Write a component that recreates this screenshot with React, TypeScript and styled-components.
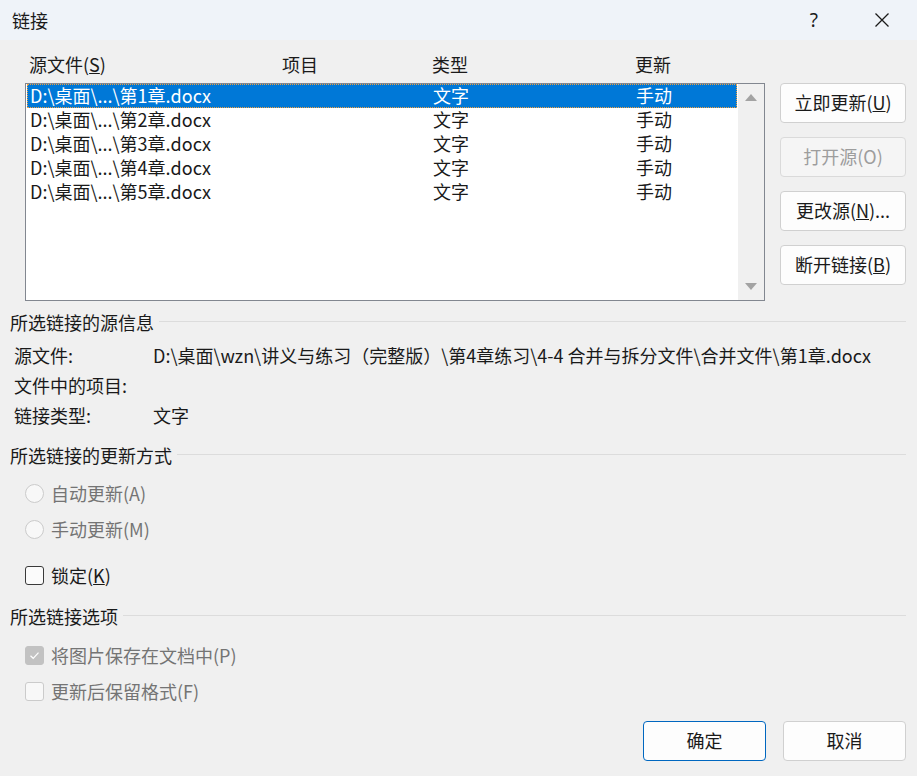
import { createGlobalStyle, styled } from "styled-components"

const GlobalStyle = createGlobalStyle`
  html, body {
    margin: 0;
    padding: 0;
    background: #f0f0f0;
  }
  body {
    font-family: "Noto Sans CJK SC", "Noto Sans", sans-serif;
    font-size: 18px;
    color: #1a1a1a;
  }
`

type LinkItem = { file: string; item: string; kind: string; update: string }

const links: LinkItem[] = [1, 2, 3, 4, 5].map((n) => ({
  file: `D:\\桌面\\...\\第${n}章.docx`,
  item: "",
  kind: "文字",
  update: "手动",
}))

const sourcePath = "D:\\桌面\\wzn\\讲义与练习（完整版）\\第4章练习\\4-4 合并与拆分文件\\合并文件\\第1章.docx"

const Key = ({ children }: { children: string }) => <u>{children}</u>

const App = () => {
  return (
    <Wrapper>
      <GlobalStyle />
      <TitleBar>
        <span>链接</span>
        <TitleTools>
          <HelpMark>?</HelpMark>
          <svg width="16" height="16" viewBox="0 0 16 16">
            <path d="M1.5 1.5 L14.5 14.5 M14.5 1.5 L1.5 14.5" stroke="#1a1a1a" strokeWidth="1.3" fill="none" />
          </svg>
        </TitleTools>
      </TitleBar>

      <Body>
        <TopArea>
          <div>
            <Columns className="head">
              <span>源文件(<Key>S</Key>)</span>
              <span>项目</span>
              <span>类型</span>
              <span>更新</span>
            </Columns>
            <ListBox>
              <Rows>
                {links.map((each, index) => (
                  <Row key={index} $selected={index === 0}>
                    <Columns>
                      <span>{each.file}</span>
                      <span>{each.item}</span>
                      <span>{each.kind}</span>
                      <span>{each.update}</span>
                    </Columns>
                  </Row>
                ))}
              </Rows>
              <ScrollTrack>
                <Arrow $down={false} />
                <Arrow $down />
              </ScrollTrack>
            </ListBox>
          </div>
          <SideButtons>
            <Button>立即更新(<Key>U</Key>)</Button>
            <Button disabled>打开源(O)</Button>
            <Button>更改源(<Key>N</Key>)...</Button>
            <Button>断开链接(<Key>B</Key>)</Button>
          </SideButtons>
        </TopArea>

        <GroupTitle $top={9}>所选链接的源信息</GroupTitle>
        <InfoList>
          <InfoRow>
            <span>源文件:</span>
            <span>{sourcePath}</span>
          </InfoRow>
          <InfoRow>
            <span>文件中的项目:</span>
            <span></span>
          </InfoRow>
          <InfoRow>
            <span>链接类型:</span>
            <span>文字</span>
          </InfoRow>
        </InfoList>

        <GroupTitle $top={13}>所选链接的更新方式</GroupTitle>
        <Options $top={8}>
          <Option $disabled>
            <Radio />
            <span>自动更新(A)</span>
          </Option>
          <Option $disabled>
            <Radio />
            <span>手动更新(M)</span>
          </Option>
          <Option className="lock">
            <CheckBox />
            <span>锁定(<Key>K</Key>)</span>
          </Option>
        </Options>

        <GroupTitle $top={11}>所选链接选项</GroupTitle>
        <Options $top={9}>
          <Option $disabled>
            <CheckBox $checked $disabled>
              <svg width="13" height="13" viewBox="0 0 13 13">
                <path d="M2.5 6.8 L5.2 9.3 L10.5 3.6" stroke="#fff" strokeWidth="1.2" fill="none" />
              </svg>
            </CheckBox>
            <span>将图片保存在文档中(P)</span>
          </Option>
          <Option $disabled>
            <CheckBox $disabled />
            <span>更新后保留格式(F)</span>
          </Option>
        </Options>

        <Footer>
          <Button className="primary">确定</Button>
          <Button>取消</Button>
        </Footer>
      </Body>
    </Wrapper>
  )
}

const Wrapper = styled.div`
  width: 917px;
  height: 776px;
  background: #f0f0f0;
  display: flex;
  flex-direction: column;
  overflow: hidden;
`

const TitleBar = styled.div`
  height: 40px;
  flex: none;
  background: #eff3f9;
  display: flex;
  align-items: center;
  justify-content: space-between;
  padding-left: 12px;
  line-height: 1;
`

const TitleTools = styled.div`
  display: flex;
  align-items: center;
  gap: 56px;
  padding-right: 27px;
`

const HelpMark = styled.span`
  font-family: "Noto Sans", sans-serif;
  font-size: 19px;
`

const Body = styled.div`
  padding: 0 11px 0 10px;
  display: flex;
  flex-direction: column;
`

const TopArea = styled.div`
  display: grid;
  grid-template-columns: 740px 126px;
  column-gap: 15px;
  padding-left: 15px;
  margin-top: 12px;
  align-items: end;
`

const Columns = styled.div`
  display: grid;
  grid-template-columns: 253px 150px 203px 1fr;
  height: 24px;
  align-items: center;
  line-height: 1;
  white-space: nowrap;

  &.head {
    padding-left: 4px;
    margin-bottom: 7px;
  }
`

const ListBox = styled.div`
  height: 218px;
  box-sizing: border-box;
  border: 1px solid #828790;
  background: #fff;
  display: flex;
`

const Rows = styled.div`
  flex: 1;
  padding: 0 1px;
`

const Row = styled.div<{ $selected?: boolean }>`
  box-sizing: border-box;
  height: 24px;
  padding-left: 2px;
  background: ${({ $selected }) => ($selected ? "#0078d7" : "transparent")};
  color: ${({ $selected }) => ($selected ? "#fff" : "#1a1a1a")};
  border: 1px dotted ${({ $selected }) => ($selected ? "#f0a040" : "transparent")};
  display: flex;
  align-items: center;

  ${Columns} {
    flex: 1;
    height: 22px;
    margin-top: -2px;
  }
`

const ScrollTrack = styled.div`
  width: 26px;
  background: #f0f0f0;
  display: flex;
  flex-direction: column;
  justify-content: space-between;
  align-items: center;
  padding: 10px 0;
`

const Arrow = styled.div<{ $down?: boolean }>`
  width: 0;
  height: 0;
  border-left: 6px solid transparent;
  border-right: 6px solid transparent;
  ${({ $down }) => ($down ? "border-top: 7px solid #a3a3a3;" : "border-bottom: 7px solid #a3a3a3;")}
`

const SideButtons = styled.div`
  display: flex;
  flex-direction: column;
  gap: 14px;
  height: 218px;
`

const Button = styled.button`
  height: 40px;
  box-sizing: border-box;
  border: 1px solid #d0d0d0;
  border-radius: 4px;
  background: #fdfdfd;
  font-family: inherit;
  font-size: 18px;
  color: #1a1a1a;
  padding: 0 0 2px;
  line-height: 1;

  &:disabled {
    color: #9d9d9d;
    background: #f5f5f5;
    border-color: #dadada;
  }

  &.primary {
    border-color: #0067c0;
  }
`

const GroupTitle = styled.div<{ $top: number }>`
  margin-top: ${({ $top }) => $top}px;
  height: 24px;
  display: flex;
  align-items: center;
  gap: 5px;
  line-height: 1;
  white-space: nowrap;

  &::after {
    content: "";
    flex: 1;
    height: 1px;
    background: #dcdcdc;
    margin-top: -2px;
  }
`

const InfoList = styled.div`
  margin-top: 6px;
  padding-left: 4px;
`

const InfoRow = styled.div`
  display: grid;
  grid-template-columns: 139px 1fr;
  height: 30px;
  align-items: center;
  line-height: 1;
  white-space: nowrap;
`

const Options = styled.div<{ $top: number }>`
  margin-top: ${({ $top }) => $top}px;
  padding-left: 15px;
  display: flex;
  flex-direction: column;

  .lock {
    margin-top: 10px;
  }
`

const Option = styled.div<{ $disabled?: boolean }>`
  height: 36px;
  display: flex;
  align-items: center;
  gap: 7px;
  line-height: 1;
  color: ${({ $disabled }) => ($disabled ? "#747474" : "#1a1a1a")};
`

const Radio = styled.span`
  width: 19px;
  height: 19px;
  box-sizing: border-box;
  border-radius: 50%;
  border: 1px solid #cbcbcb;
  background: #f8f8f8;
`

const CheckBox = styled.span<{ $checked?: boolean; $disabled?: boolean }>`
  width: 19px;
  height: 19px;
  box-sizing: border-box;
  border-radius: 3px;
  border: 1px solid ${({ $checked, $disabled }) => ($checked ? "#c2c2c2" : $disabled ? "#cbcbcb" : "#3a3a3a")};
  background: ${({ $checked, $disabled }) => ($checked ? "#c2c2c2" : $disabled ? "#f8f8f8" : "#fbfbfb")};
  display: flex;
  align-items: center;
  justify-content: center;
`

const Footer = styled.div`
  margin-top: 12px;
  display: flex;
  justify-content: flex-end;
  gap: 17px;

  ${Button} {
    width: 123px;
  }
`

export default App
